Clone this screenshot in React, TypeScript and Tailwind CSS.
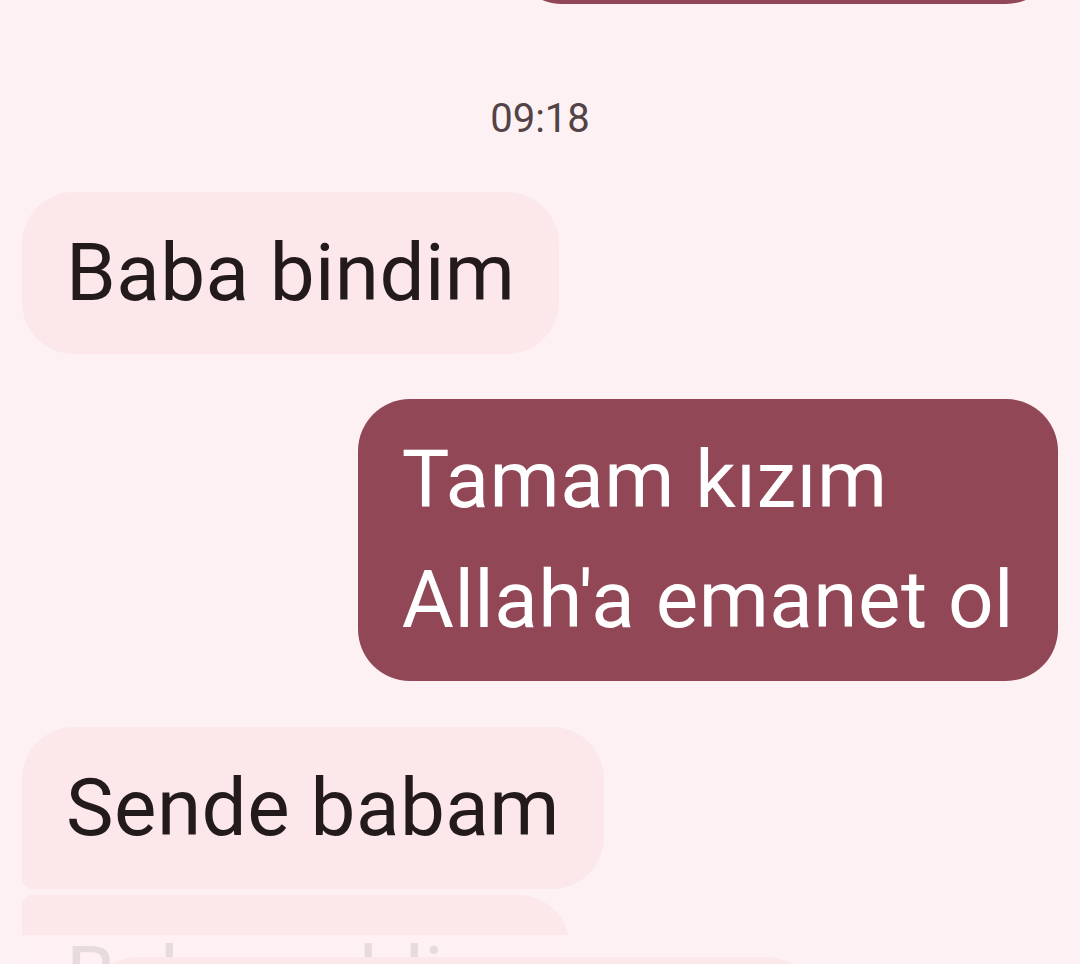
export default function App() {
  return (
    <div className="relative w-[1080px] h-[964px] overflow-hidden bg-[#fef1f4] font-['Roboto','Noto_Sans',sans-serif]">
      <div className="flex flex-col px-[22px]">
        <div className="self-end w-[548px] h-[162px] -mt-[158px] rounded-[52px] bg-[#924756]" />
        <div className="mt-[91px] text-center text-[40px] leading-[48px] text-[#524346]">09:18</div>
        <div className="mt-[49px] self-start rounded-[52px] bg-[#fce7ea] px-[44px] py-[21px] text-[80px] leading-[120px] tracking-[0.4px] text-[#231a1c]">
          Baba bindim
        </div>
        <div className="mt-[45px] self-end rounded-[52px] bg-[#924756] px-[44px] py-[21px] text-[80px] leading-[120px] tracking-[0.5px] text-white">
          Tamam kızım
          <br />
          Allah'a emanet ol
        </div>
        <div className="mt-[46px] self-start rounded-[52px] rounded-bl-[10px] bg-[#fce7ea] px-[44px] py-[21px] text-[80px] leading-[120px] tracking-[0.5px] text-[#231a1c]">
          Sende babam
        </div>
        <div className="mt-[6px] self-start w-[548px] rounded-[52px] rounded-tl-[10px] bg-[#fce7ea] px-[44px] py-[21px] text-[80px] leading-[120px] tracking-[0.5px] text-[#231a1c]">
          Baba geldim
        </div>
      </div>
      <div className="absolute left-0 right-0 top-[935px] bottom-0 bg-[#fef1f4]/90">
        <div className="absolute left-[72px] top-[22px] w-[761px] h-[140px] rounded-[70px] bg-[#fce8eb]" />
      </div>
    </div>
  );
}
